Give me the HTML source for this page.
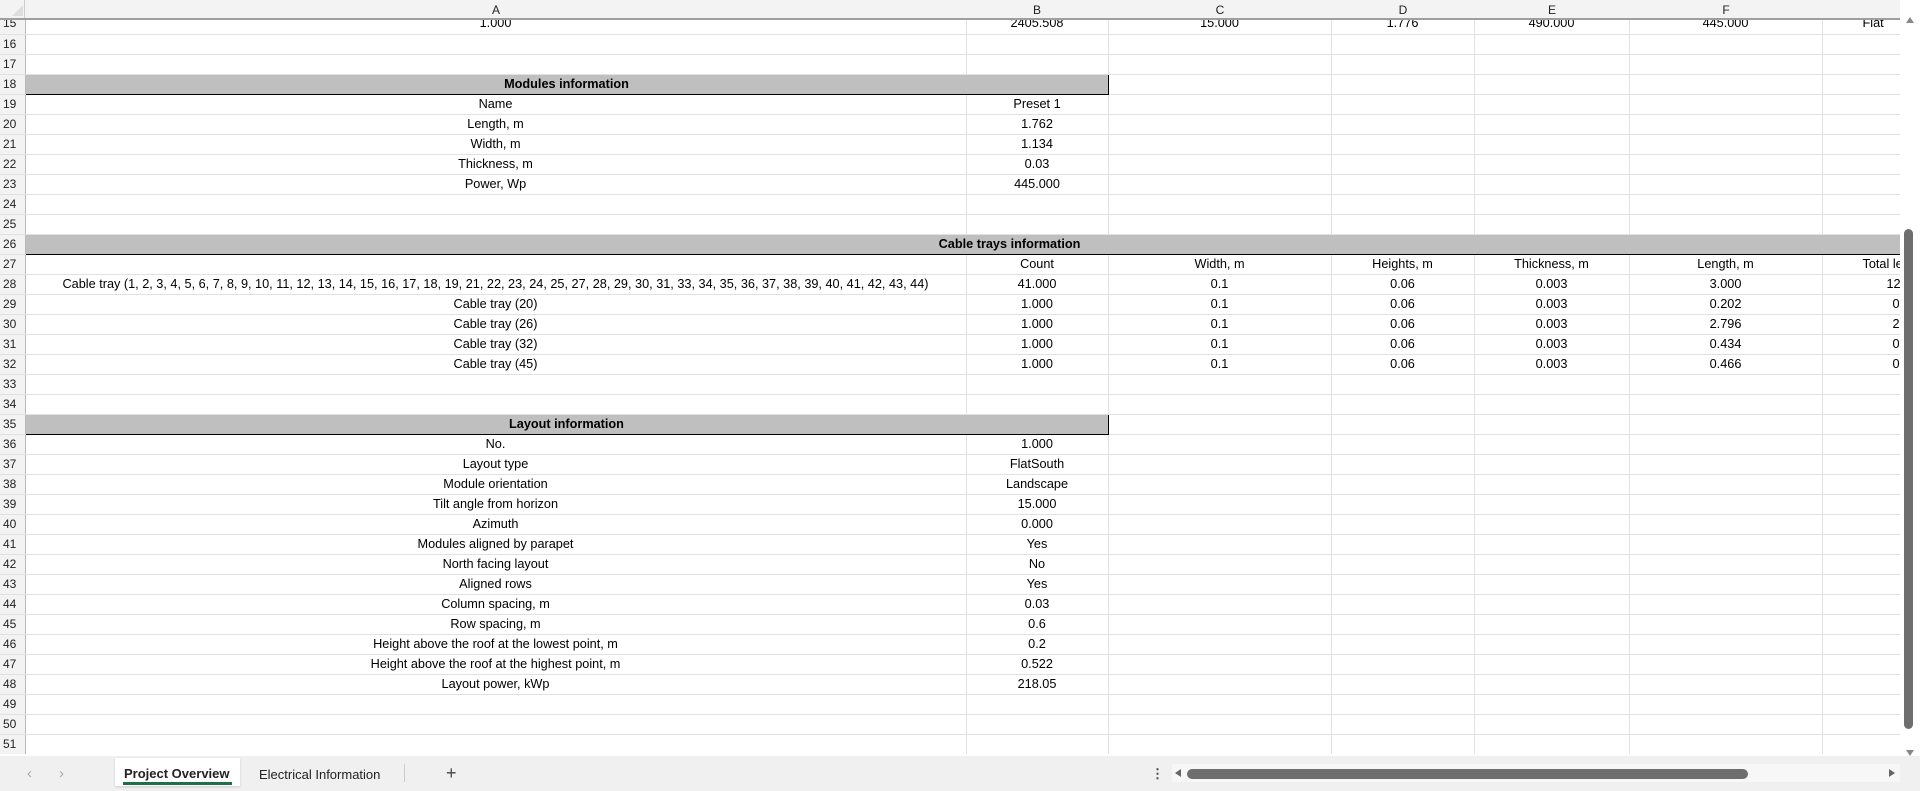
<!DOCTYPE html>
<html><head><meta charset="utf-8"><style>
*{margin:0;padding:0;box-sizing:border-box}
body{width:1920px;height:791px;overflow:hidden;background:#fff;font-family:"Liberation Sans",sans-serif;font-size:12.7px;color:#000;position:relative}
#wrap{position:absolute;left:0;top:0;width:1900px;height:754px;overflow:hidden}
#grid{position:absolute;left:0;top:14px;border-collapse:collapse;table-layout:fixed;width:1900px}
#grid td{height:20px;border-right:1px solid #e1e1e1;border-bottom:1px solid #e1e1e1;text-align:center;white-space:nowrap;overflow:hidden;padding:0;line-height:19px}
#grid td.rh{background:#f3f3f3;color:#222;font-size:12px;text-align:left;padding-left:3px;border-right:1px solid #b8b8b8;border-bottom:1px solid #e1e1e1}
#grid td.g{text-align:left;padding-left:40px}
#grid td.band{background:#bfbfbf;font-weight:bold;border-top:1.5px solid #000;border-bottom:1.5px solid #000;border-right:1.5px solid #000}
#hdr{position:absolute;left:0;top:0;width:1900px;height:20px;background:#f3f3f3;border-bottom:2px solid #9e9e9e;font-size:12px;color:#222}
#hdr span{position:absolute;top:3px;transform:translateX(-50%)}
#vs{position:absolute;left:1900px;top:0;width:20px;height:758px;background:#fff}
#tabs{position:absolute;left:0;top:756px;width:1920px;height:35px;background:#f0f0f0;font-size:13px;color:#222}
</style></head><body>
<div id="wrap">
<table id="grid">
<colgroup><col style="width:25px"><col style="width:941px"><col style="width:142px"><col style="width:223px"><col style="width:143px"><col style="width:155px"><col style="width:193px"><col style="width:78px"></colgroup>
<tr><td class="rh">15</td><td>1.000</td><td>2405.508</td><td>15.000</td><td>1.776</td><td>490.000</td><td>445.000</td><td class="g">Flat</td></tr>
<tr><td class="rh">16</td><td></td><td></td><td></td><td></td><td></td><td></td><td></td></tr>
<tr><td class="rh">17</td><td></td><td></td><td></td><td></td><td></td><td></td><td></td></tr>
<tr><td class="rh">18</td><td class="band" colspan="2">Modules information</td><td></td><td></td><td></td><td></td><td></td></tr>
<tr><td class="rh">19</td><td>Name</td><td>Preset 1</td><td></td><td></td><td></td><td></td><td></td></tr>
<tr><td class="rh">20</td><td>Length, m</td><td>1.762</td><td></td><td></td><td></td><td></td><td></td></tr>
<tr><td class="rh">21</td><td>Width, m</td><td>1.134</td><td></td><td></td><td></td><td></td><td></td></tr>
<tr><td class="rh">22</td><td>Thickness, m</td><td>0.03</td><td></td><td></td><td></td><td></td><td></td></tr>
<tr><td class="rh">23</td><td>Power, Wp</td><td>445.000</td><td></td><td></td><td></td><td></td><td></td></tr>
<tr><td class="rh">24</td><td></td><td></td><td></td><td></td><td></td><td></td><td></td></tr>
<tr><td class="rh">25</td><td></td><td></td><td></td><td></td><td></td><td></td><td></td></tr>
<tr><td class="rh">26</td><td class="band" colspan="7" style="padding-left:94px">Cable trays information</td></tr>
<tr><td class="rh">27</td><td></td><td>Count</td><td>Width, m</td><td>Heights, m</td><td>Thickness, m</td><td>Length, m</td><td class="g">Total length</td></tr>
<tr><td class="rh">28</td><td>Cable tray (1, 2, 3, 4, 5, 6, 7, 8, 9, 10, 11, 12, 13, 14, 15, 16, 17, 18, 19, 21, 22, 23, 24, 25, 27, 28, 29, 30, 31, 33, 34, 35, 36, 37, 38, 39, 40, 41, 42, 43, 44)</td><td>41.000</td><td>0.1</td><td>0.06</td><td>0.003</td><td>3.000</td><td class="g" style="padding-left:64px">123</td></tr>
<tr><td class="rh">29</td><td>Cable tray (20)</td><td>1.000</td><td>0.1</td><td>0.06</td><td>0.003</td><td>0.202</td><td class="g" style="padding-left:70px">0.2</td></tr>
<tr><td class="rh">30</td><td>Cable tray (26)</td><td>1.000</td><td>0.1</td><td>0.06</td><td>0.003</td><td>2.796</td><td class="g" style="padding-left:70px">2.7</td></tr>
<tr><td class="rh">31</td><td>Cable tray (32)</td><td>1.000</td><td>0.1</td><td>0.06</td><td>0.003</td><td>0.434</td><td class="g" style="padding-left:70px">0.4</td></tr>
<tr><td class="rh">32</td><td>Cable tray (45)</td><td>1.000</td><td>0.1</td><td>0.06</td><td>0.003</td><td>0.466</td><td class="g" style="padding-left:70px">0.4</td></tr>
<tr><td class="rh">33</td><td></td><td></td><td></td><td></td><td></td><td></td><td></td></tr>
<tr><td class="rh">34</td><td></td><td></td><td></td><td></td><td></td><td></td><td></td></tr>
<tr><td class="rh">35</td><td class="band" colspan="2">Layout information</td><td></td><td></td><td></td><td></td><td></td></tr>
<tr><td class="rh">36</td><td>No.</td><td>1.000</td><td></td><td></td><td></td><td></td><td></td></tr>
<tr><td class="rh">37</td><td>Layout type</td><td>FlatSouth</td><td></td><td></td><td></td><td></td><td></td></tr>
<tr><td class="rh">38</td><td>Module orientation</td><td>Landscape</td><td></td><td></td><td></td><td></td><td></td></tr>
<tr><td class="rh">39</td><td>Tilt angle from horizon</td><td>15.000</td><td></td><td></td><td></td><td></td><td></td></tr>
<tr><td class="rh">40</td><td>Azimuth</td><td>0.000</td><td></td><td></td><td></td><td></td><td></td></tr>
<tr><td class="rh">41</td><td>Modules aligned by parapet</td><td>Yes</td><td></td><td></td><td></td><td></td><td></td></tr>
<tr><td class="rh">42</td><td>North facing layout</td><td>No</td><td></td><td></td><td></td><td></td><td></td></tr>
<tr><td class="rh">43</td><td>Aligned rows</td><td>Yes</td><td></td><td></td><td></td><td></td><td></td></tr>
<tr><td class="rh">44</td><td>Column spacing, m</td><td>0.03</td><td></td><td></td><td></td><td></td><td></td></tr>
<tr><td class="rh">45</td><td>Row spacing, m</td><td>0.6</td><td></td><td></td><td></td><td></td><td></td></tr>
<tr><td class="rh">46</td><td>Height above the roof at the lowest point, m</td><td>0.2</td><td></td><td></td><td></td><td></td><td></td></tr>
<tr><td class="rh">47</td><td>Height above the roof at the highest point, m</td><td>0.522</td><td></td><td></td><td></td><td></td><td></td></tr>
<tr><td class="rh">48</td><td>Layout power, kWp</td><td>218.05</td><td></td><td></td><td></td><td></td><td></td></tr>
<tr><td class="rh">49</td><td></td><td></td><td></td><td></td><td></td><td></td><td></td></tr>
<tr><td class="rh">50</td><td></td><td></td><td></td><td></td><td></td><td></td><td></td></tr>
<tr><td class="rh">51</td><td></td><td></td><td></td><td></td><td></td><td></td><td></td></tr>
<tr><td class="rh"></td><td></td><td></td><td></td><td></td><td></td><td></td><td></td></tr>
</table>
<div id="hdr">
<div style="position:absolute;left:0;top:0;width:25px;height:18px;border-right:1px solid #ccc"></div>
<svg style="position:absolute;left:12px;top:5px" width="11" height="11"><path d="M11 0 L11 11 L0 11Z" fill="#ddd"/></svg>
<span style="left:496px">A</span><span style="left:1037px">B</span><span style="left:1220px">C</span><span style="left:1403px">D</span><span style="left:1552px">E</span><span style="left:1726px">F</span>
</div>
</div>
<div id="vs">
<svg style="position:absolute;left:5px;top:16px" width="10" height="8"><path d="M5 1 L9 7 L1 7Z" fill="#888"/></svg>
<div style="position:absolute;left:4px;top:229px;width:9px;height:500px;background:#6e6e6e;border-radius:5px"></div>
<svg style="position:absolute;left:5px;top:749px" width="10" height="8"><path d="M1 1 L9 1 L5 7Z" fill="#888"/></svg>
</div>
<div id="tabs">
<span style="position:absolute;left:27px;top:9px;color:#aaa;font-size:15px">&lsaquo;</span>
<span style="position:absolute;left:59px;top:9px;color:#aaa;font-size:15px">&rsaquo;</span>
<div style="position:absolute;left:115px;top:2px;width:125px;height:28px;background:#fff;box-shadow:0 1px 2px #ccc"></div>
<span style="position:absolute;left:124px;top:10px;font-weight:bold;color:#222">Project Overview</span>
<div style="position:absolute;left:123px;top:26px;width:109px;height:3px;background:#1e7145"></div>
<span style="position:absolute;left:259px;top:11px">Electrical Information</span>
<div style="position:absolute;left:404px;top:8px;width:1px;height:18px;background:#ccc"></div>
<span style="position:absolute;left:446px;top:7px;font-size:18px;color:#444">+</span>
<span style="position:absolute;left:1151px;top:10px;font-weight:bold;color:#444">&#8942;</span>
<div style="position:absolute;left:1172px;top:8px;width:728px;height:18px;background:#f7f7f7"></div>
<svg style="position:absolute;left:1174px;top:12px" width="8" height="10"><path d="M7 1 L1 5 L7 9Z" fill="#666"/></svg>
<div style="position:absolute;left:1187px;top:13px;width:561px;height:10px;background:#6e6e6e;border-radius:5px"></div>
<svg style="position:absolute;left:1888px;top:12px" width="8" height="10"><path d="M1 1 L7 5 L1 9Z" fill="#666"/></svg>
</div>
</body></html>
